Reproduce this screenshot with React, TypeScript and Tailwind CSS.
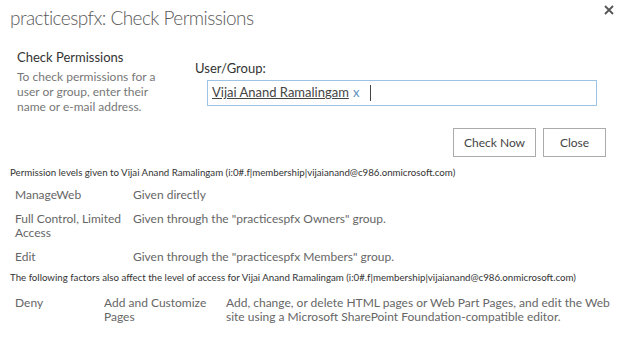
import React from 'react';

const font = { fontFamily: 'Lato, "Open Sans", sans-serif' };

function Row({ name, detail }: { name: React.ReactNode; detail: string }) {
    return (
        <div className="flex text-[12px] leading-[14px] text-[#666]">
            <div className="w-[118px] shrink-0">{name}</div>
            <div>{detail}</div>
        </div>
    );
}

export default function App() {
    return (
        <div className="relative w-[624px] h-[337px] bg-white overflow-hidden" style={font}>
            {/* Title */}
            <div className="pl-[10px] pt-[4px] text-[19px] font-light text-[#5a5a5a] leading-[28px] tracking-[-0.55px]">
                practicespfx: Check Permissions
            </div>
            <button className="absolute top-[5px] right-[10px]">
                <svg width="10" height="10" viewBox="0 0 10 10">
                    <path d="M1 1 L9 9 M9 1 L1 9" stroke="#555" strokeWidth="1.8" />
                </svg>
            </button>

            {/* Check section */}
            <div className="flex mt-[16px]">
                <div className="w-[195px] pl-[17px] shrink-0">
                    <div className="text-[13px] text-[#333] leading-[18px]">Check Permissions</div>
                    <div className="mt-[3px] w-[140px] text-[12px] text-[#777] leading-[15px]">
                        To check permissions for a user or group, enter their name or e-mail address.
                    </div>
                </div>
                <div className="flex-1 pt-[11px]">
                    <div className="text-[13px] text-[#333] leading-[18px]">User/Group:</div>
                    <div className="ml-[12px] mt-[3px] w-[390px] h-[26px] border border-[#9cc3e3] flex items-center pl-[4px] text-[13px]">
                        <span className="underline text-[#444]">Vijai Anand Ramalingam</span>
                        <span className="ml-[4px] text-[#5b8fc0]">x</span>
                        <span className="ml-[11px] w-px h-[16px] bg-[#444]"></span>
                    </div>
                </div>
            </div>

            {/* Buttons */}
            <div className="flex justify-end gap-[7px] pr-[18px] mt-[14px]">
                <button className="w-[83px] h-[29px] border border-[#ababab] bg-white text-[12px] text-[#444]">Check Now</button>
                <button className="w-[63px] h-[29px] border border-[#ababab] bg-white text-[12px] text-[#444]">Close</button>
            </div>

            {/* Results */}
            <div className="pl-[10px] mt-[8px] text-[9.7px] text-[#333] leading-[14px]">
                Permission levels given to Vijai Anand Ramalingam (i:0#.f|membership|vijaianand@c986.onmicrosoft.com)
            </div>
            <div className="pl-[15px] mt-[9px] flex flex-col gap-[10px]">
                <Row name="ManageWeb" detail="Given directly" />
                <Row name={<>Full Control, Limited<br />Access</>} detail={'Given through the "practicespfx Owners" group.'} />
                <Row name="Edit" detail={'Given through the "practicespfx Members" group.'} />
            </div>
            <div className="pl-[10px] mt-[6px] text-[9.7px] text-[#333] leading-[14px]">
                The following factors also affect the level of access for Vijai Anand Ramalingam (i:0#.f|membership|vijaianand@c986.onmicrosoft.com)
            </div>
            <div className="pl-[15px] mt-[12px] flex text-[12px] leading-[14px] text-[#666]">
                <div className="w-[89px] shrink-0">Deny</div>
                <div className="w-[122px] shrink-0">Add and Customize<br />Pages</div>
                <div className="w-[395px]">
                    Add, change, or delete HTML pages or Web Part Pages, and edit the Web site using a Microsoft SharePoint Foundation-compatible editor.
                </div>
            </div>
        </div>
    );
}
